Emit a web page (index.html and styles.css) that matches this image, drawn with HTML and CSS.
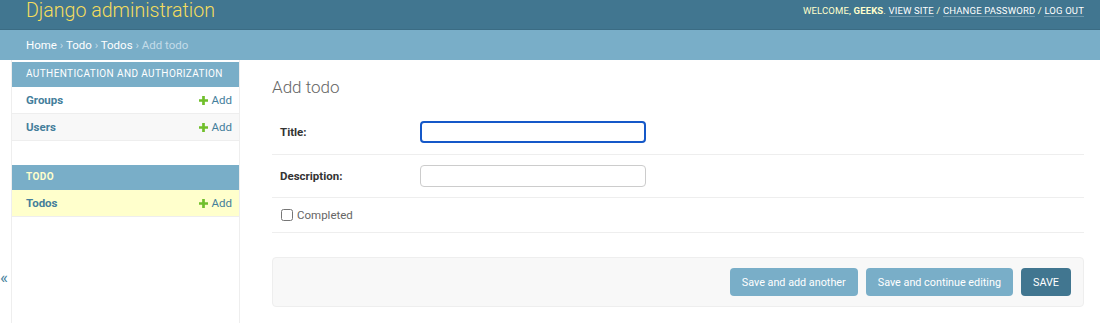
FILE: index.html
```html
<!DOCTYPE html>
<html lang="en">
<head>
    <meta charset="UTF-8">
    <title>Add todo | Django site admin</title>
    <link rel="stylesheet" href="styles.css">
</head>
<body>

    <!-- Header -->
    <div class="header">
        <div class="branding">Django administration</div>
        <div class="user-tools">
            Welcome, <strong>geeks</strong>.
            <a href="#">View site</a> /
            <a href="#">Change password</a> /
            <a href="#">Log out</a>
        </div>
    </div>

    <div class="breadcrumbs">
        <a href="#">Home</a> &rsaquo; <a href="#">Todo</a> &rsaquo; <a href="#">Todos</a> &rsaquo; Add todo
    </div>

    <div class="main">
        <button class="toggle-nav">&laquo;</button>

        <!-- Sidebar -->
        <div class="nav-sidebar">
            <div class="module">
                <div class="caption">Authentication and Authorization</div>
                <div class="model-row">
                    <a href="#" class="model-name">Groups</a>
                    <a href="#" class="addlink"><svg class="plus" viewBox="0 0 10 10"><path d="M3.5 0h3v3.5H10v3H6.5V10h-3V6.5H0v-3h3.5z"/></svg>Add</a>
                </div>
                <div class="model-row alt">
                    <a href="#" class="model-name">Users</a>
                    <a href="#" class="addlink"><svg class="plus" viewBox="0 0 10 10"><path d="M3.5 0h3v3.5H10v3H6.5V10h-3V6.5H0v-3h3.5z"/></svg>Add</a>
                </div>
            </div>
            <div class="module">
                <div class="caption app">Todo</div>
                <div class="model-row current">
                    <a href="#" class="model-name">Todos</a>
                    <a href="#" class="addlink"><svg class="plus" viewBox="0 0 10 10"><path d="M3.5 0h3v3.5H10v3H6.5V10h-3V6.5H0v-3h3.5z"/></svg>Add</a>
                </div>
            </div>
        </div>

        <!-- Content -->
        <div class="content">
            <h1>Add todo</h1>
            <div class="form-row first">
                <label class="required">Title:</label>
                <input type="text" class="focused" value="">
            </div>
            <div class="form-row">
                <label class="required">Description:</label>
                <input type="text" value="">
            </div>
            <div class="form-row checkbox-row">
                <input type="checkbox" id="completed">
                <label for="completed" class="vcheck">Completed</label>
            </div>

            <div class="submit-row">
                <button class="btn">Save and add another</button>
                <button class="btn">Save and continue editing</button>
                <button class="btn default">SAVE</button>
            </div>
        </div>
    </div>

</body>
</html>
```

FILE: styles.css
```css
* {
    box-sizing: border-box;
    margin: 0;
    padding: 0;
}

body {
    font-family: Roboto, "Liberation Sans", sans-serif;
    font-size: 14px;
    color: #333;
    background: #fff;
    height: 323px;
    overflow: hidden;
}

a {
    text-decoration: none;
}

.header {
    height: 30px;
    background: #417690;
    color: #ffc;
    display: flex;
    justify-content: space-between;
    align-items: flex-start;
    padding: 0 16px 0 26px;
    border-bottom: 1px solid #3b6c84;
}

.branding {
    font-size: 19.6px;
    font-weight: 300;
    color: #f5dd5d;
    margin-top: -1px;
    line-height: 24px;
}

.user-tools {
    font-size: 9.5px;
    text-transform: uppercase;
    letter-spacing: 0.15px;
    margin-top: 5px;
    color: #ffc;
}

.user-tools strong {
    font-weight: bold;
}

.user-tools a {
    color: #fff;
    border-bottom: 1px solid rgba(255, 255, 255, 0.25);
}

.breadcrumbs {
    height: 30px;
    background: #79aec8;
    color: #c4dce8;
    font-size: 11.5px;
    padding: 8px 26px 0;
}

.breadcrumbs a {
    color: #fff;
}

.main {
    display: flex;
    height: 263px;
}

.toggle-nav {
    width: 12px;
    flex: 0 0 12px;
    border: none;
    border-right: 1px solid #eee;
    background: #fff;
    color: #447e9b;
    font-size: 17px;
    padding-top: 207px;
    display: flex;
    align-items: flex-start;
    font-family: Roboto, sans-serif;
}

.nav-sidebar {
    width: 228px;
    flex: 0 0 228px;
    border-right: 1px solid #eee;
    padding-top: 2px;
}

.module {
    margin-bottom: 24px;
}

.caption {
    height: 25px;
    background: #79aec8;
    color: #fff;
    font-size: 10px;
    text-transform: uppercase;
    letter-spacing: 0.4px;
    white-space: nowrap;
    padding: 6px 14px 0;
}

.caption.app {
    font-weight: bold;
    color: #ffc;
}

.model-row {
    height: 27px;
    display: flex;
    justify-content: space-between;
    align-items: center;
    padding: 0 7px 0 14px;
    border-bottom: 1px solid #eee;
    background: #fff;
}

.model-row.alt {
    background: #f8f8f8;
}

.model-row.current {
    background: #ffc;
}

.model-name {
    color: #447e9b;
    font-weight: bold;
    font-size: 11.5px;
}

.addlink {
    color: #447e9b;
    font-size: 11.5px;
    display: flex;
    align-items: center;
}

.plus {
    width: 9px;
    height: 9px;
    fill: #70bf2b;
    margin-right: 4px;
}

.content {
    flex: 1;
    padding: 17px 16px 0 32px;
}

h1 {
    font-size: 17px;
    font-weight: 300;
    color: #666;
    margin-bottom: 13px;
}

.form-row {
    display: flex;
    align-items: center;
    padding: 10px 8px;
    border-bottom: 1px solid #eee;
}

.form-row.first {
    padding: 11px 8px;
}

.form-row label.required {
    width: 140px;
    font-size: 11.5px;
    font-weight: bold;
    color: #333;
}

.form-row input[type="text"] {
    width: 226px;
    height: 22px;
    border: 1px solid #ccc;
    border-radius: 4px;
    padding: 2px 5px;
    font-size: 13px;
}

.form-row input.focused {
    border: 2px solid #1558c8;
    border-radius: 4px;
    outline: none;
}

.checkbox-row {
    padding: 10px 9px 10px;
}

.checkbox-row input {
    width: 12px;
    height: 12px;
    margin: 0 4px 0 0;
}

.vcheck {
    font-size: 11.5px;
    color: #666;
}

.submit-row {
    margin-top: 24px;
    padding: 10px 12px;
    background: #f8f8f8;
    border: 1px solid #eee;
    border-radius: 4px;
    display: flex;
    justify-content: flex-end;
    gap: 8px;
}

.btn {
    height: 28px;
    padding: 0 12px;
    border: none;
    border-radius: 4px;
    background: #79aec8;
    color: #fff;
    font-family: Roboto, sans-serif;
    font-size: 10.8px;
}

.btn.default {
    background: #417690;
    padding: 0 12px;
}
```
